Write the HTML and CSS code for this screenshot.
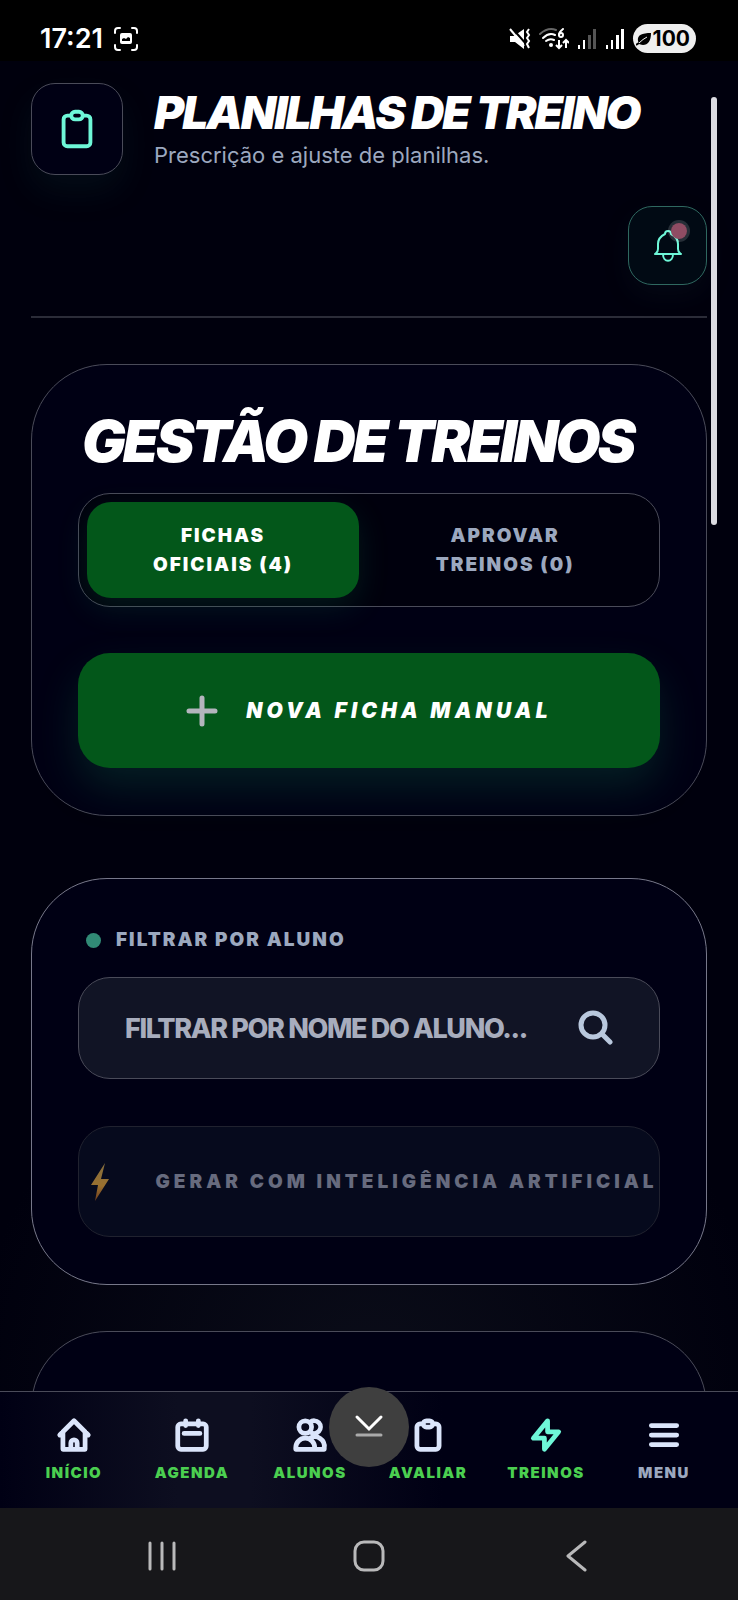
FILE: index.html
```html
<!DOCTYPE html>
<html lang="pt-BR">
<head>
  <meta charset="UTF-8">
  <title>Planilhas de Treino</title>
  <meta name="viewport" content="width=device-width, initial-scale=1.0">
  <link rel="stylesheet" href="styles.css">
</head>
<body>
  <div class="status-bar">
    <div class="status-left">
      <span class="clock">17:21</span>
      <svg width="24" height="24" viewBox="0 0 24 24" fill="none" stroke="#fff" stroke-width="2" stroke-linecap="round">
        <path d="M1 6V4a3 3 0 0 1 3-3h2M18 1h2a3 3 0 0 1 3 3v2M23 18v2a3 3 0 0 1-3 3h-2M6 23H4a3 3 0 0 1-3-3v-2"/>
        <path d="M8 6h8a2 2 0 0 1 2 2v7a2 2 0 0 1-2 2H8a2 2 0 0 1-2-2V8a2 2 0 0 1 2-2z" fill="#fff" stroke="none"/>
        <path d="M8 14v-2l2-1 2 1 2-2 2 1v3z" fill="#000" stroke="none"/>
      </svg>
    </div>
    <div class="status-right">
      <svg width="22" height="22" viewBox="0 0 22 22" fill="#fff">
        <path d="M1 8h4l10-7v20L6 14H1z"/>
        <path d="M3 0l15 17" stroke="#000" stroke-width="2"/>
        <path d="M1 1l14 17" stroke="#fff" stroke-width="2"/>
        <path d="M20 1l-2 3 2 3-2 3 2 3-2 3 2 4" fill="none" stroke="#fff" stroke-width="2"/>
      </svg>
      <svg width="30" height="22" viewBox="0 0 30 22" fill="none" stroke="#fff" stroke-width="2" stroke-linecap="round">
        <path d="M1 6Q9-1 17 2" stroke="#666"/>
        <path d="M4 10Q10 4 16 7M7 13q4-3 8-1"/>
        <circle cx="12" cy="17" r="2" fill="#fff" stroke="none"/>
        <path d="M24 1q-4 3-4 6"/>
        <circle cx="22" cy="7" r="2"/>
        <path d="M20 12v8M17 17l3 3 3-3M27 20v-7M24 15l3-3 3 3" stroke-linecap="butt"/>
      </svg>
      <svg width="20" height="20" viewBox="0 0 20 20" fill="#fff">
        <rect x="1" y="16" width="2" height="4"/>
        <rect x="6" y="11" width="2" height="9"/>
        <rect x="11" y="6" width="3" height="14" fill="#555"/>
        <rect x="16" y="0" width="3" height="20" fill="#555"/>
      </svg>
      <svg width="20" height="20" viewBox="0 0 20 20" fill="#fff">
        <rect x="1" y="16" width="2" height="4"/>
        <rect x="6" y="11" width="2" height="9"/>
        <rect x="11" y="6" width="3" height="14"/>
        <rect x="16" y="0" width="3" height="20"/>
      </svg>
      <div class="battery">
        <svg width="16" height="16" viewBox="0 0 16 16">
          <path d="M2 10C1 4 6 2 15 2c0 8-3 12-8 12-2 0-3-1-4-1z" fill="#000"/>
          <path d="M3 12q4-4 8-6" fill="none" stroke="#efefef" stroke-width="1"/>
          <path d="M0 14l3-2" stroke="#000" stroke-width="2"/>
        </svg>
        <span>100</span>
      </div>
    </div>
  </div>

  <main class="content">
    <header class="page-header">
      <div class="header-top">
        <div class="header-icon">
          <svg width="46" height="46" viewBox="0 0 24 24" fill="none" stroke="currentColor" stroke-width="2" stroke-linecap="round" stroke-linejoin="round">
            <path d="M9 5H7a2 2 0 0 0-2 2v12a2 2 0 0 0 2 2h10a2 2 0 0 0 2-2V7a2 2 0 0 0-2-2h-2M9 5a2 2 0 0 0 2 2h2a2 2 0 0 0 2-2M9 5a2 2 0 0 1 2-2h2a2 2 0 0 1 2 2"/>
          </svg>
        </div>
        <div class="header-text">
          <h1>Planilhas de Treino</h1>
          <p>Prescrição e ajuste de planilhas.</p>
        </div>
      </div>
      <div class="header-actions">
        <button class="bell-button" type="button" aria-label="Notificações">
          <svg width="32" height="36" viewBox="0 0 32 36" fill="none" stroke="currentColor" stroke-width="2" stroke-linecap="round" stroke-linejoin="round">
            <path d="M16 3c-2 0-3 1-3 3-4 2-7 5-7 10v5c0 3-1 3-3 5h26c-2-2-3-2-3-5v-5c0-5-3-8-7-10 0-2-1-3-3-3z"/>
            <path d="M11 26c0 9 10 9 10 0"/>
          </svg>
          <span class="bell-dot"></span>
        </button>
      </div>
    </header>

    <section class="card">
      <h2>Gestão de Treinos</h2>
      <div class="tabs">
        <button class="tab active" type="button">Fichas<br>Oficiais (4)</button>
        <button class="tab" type="button">Aprovar<br>Treinos (0)</button>
      </div>
      <button class="new-button" type="button">
        <svg width="32" height="32" viewBox="0 0 32 32" fill="none" stroke="#b4b5bd" stroke-width="5" stroke-linecap="round">
          <path d="M16 3v26M3 16h26"/>
        </svg>
        <span>Nova Ficha Manual</span>
      </button>
    </section>

    <section class="card filter-card">
      <label class="filter-label" for="filtro"><span class="dot"></span>Filtrar por Aluno</label>
      <div class="search-box">
        <input type="text" id="filtro" placeholder="FILTRAR POR NOME DO ALUNO...">
        <svg width="36" height="36" viewBox="0 0 36 36" fill="none" stroke="#b9c8dd" stroke-width="5" stroke-linecap="round">
          <circle cx="16" cy="15" r="12"/>
          <path d="M25 24l8 8"/>
        </svg>
      </div>
      <button class="ai-button" type="button" disabled>
        <svg width="20" height="40" viewBox="0 0 20 40">
          <defs>
            <linearGradient id="raio" x1="0" y1="0" x2="0" y2="1">
              <stop offset="0" stop-color="#87703f"/>
              <stop offset="0.6" stop-color="#99702f"/>
              <stop offset="1" stop-color="#703c1c"/>
            </linearGradient>
          </defs>
          <path d="M15 1L1 23h7L5 39 19 17h-8z" fill="url(#raio)"/>
        </svg>
        <span>Gerar com Inteligência Artificial</span>
      </button>
    </section>

    <section class="card list-card"></section>
    <div class="scroll-thumb"></div>
  </main>

  <nav class="bottom-nav">
    <a href="#">
      <svg width="38" height="38" viewBox="0 0 24 24" fill="none" stroke="currentColor" stroke-width="3" stroke-linecap="round" stroke-linejoin="round">
        <path d="M3 12l9-9 9 9M5 10v11h14V10M10 21v-4a2 2 0 0 1 4 0v4"/>
      </svg>
      <span>Início</span>
    </a>
    <a href="#">
      <svg width="38" height="38" viewBox="0 0 24 24" fill="none" stroke="currentColor" stroke-width="3" stroke-linecap="round" stroke-linejoin="round">
        <path d="M8 3v3M16 3v3M7 11h10M5 5h14a2 2 0 0 1 2 2v12a2 2 0 0 1-2 2H5a2 2 0 0 1-2-2V7a2 2 0 0 1 2-2z"/>
      </svg>
      <span>Agenda</span>
    </a>
    <a href="#">
      <svg width="38" height="38" viewBox="0 0 24 24" fill="none" stroke="currentColor" stroke-width="3" stroke-linecap="round" stroke-linejoin="round">
        <circle cx="9" cy="7" r="4"/>
        <path d="M12 4a4 4 0 1 1 0 6M3 21v-1a6 6 0 0 1 12 0v1zM12 14a6 6 0 0 1 9 6v1h-6"/>
      </svg>
      <span>Alunos</span>
    </a>
    <a href="#">
      <svg width="38" height="38" viewBox="0 0 24 24" fill="none" stroke="currentColor" stroke-width="3" stroke-linecap="round" stroke-linejoin="round">
        <path d="M9 5H7a2 2 0 0 0-2 2v12a2 2 0 0 0 2 2h10a2 2 0 0 0 2-2V7a2 2 0 0 0-2-2h-2M9 5a2 2 0 0 0 2 2h2a2 2 0 0 0 2-2M9 5a2 2 0 0 1 2-2h2a2 2 0 0 1 2 2"/>
      </svg>
      <span>Avaliar</span>
    </a>
    <a href="#" class="current">
      <svg width="38" height="38" viewBox="0 0 24 24" fill="none" stroke="currentColor" stroke-width="3" stroke-linecap="round" stroke-linejoin="round">
        <path d="M13 10V3L4 14h7v7l9-11h-7z"/>
      </svg>
      <span>Treinos</span>
    </a>
    <a href="#" class="menu">
      <svg width="38" height="38" viewBox="0 0 24 24" fill="none" stroke="currentColor" stroke-width="3" stroke-linecap="round">
        <path d="M4 6h16M4 12h16M4 18h16"/>
      </svg>
      <span>Menu</span>
    </a>
    <button class="scroll-down" type="button" aria-label="Rolar até o fim">
      <svg width="32" height="28" viewBox="0 0 32 28" fill="none" stroke-width="3" stroke-linecap="round">
        <path d="M4 4l12 12L28 4" stroke="#fff"/>
        <path d="M4 22h24" stroke="#aaa"/>
      </svg>
    </button>
  </nav>

  <div class="system-nav">
    <button type="button" aria-label="Recentes">
      <svg width="32" height="32" viewBox="0 0 32 32" stroke="#b9b9ba" stroke-width="3" stroke-linecap="round">
        <path d="M4 3v26M16 3v26M28 3v26"/>
      </svg>
    </button>
    <button type="button" aria-label="Tela inicial">
      <svg width="32" height="32" viewBox="0 0 32 32" fill="none" stroke="#b9b9ba" stroke-width="3">
        <rect x="2" y="2" width="28" height="28" rx="9"/>
      </svg>
    </button>
    <button type="button" aria-label="Voltar">
      <svg width="32" height="32" viewBox="0 0 32 32" fill="none" stroke="#b9b9ba" stroke-width="3" stroke-linecap="round" stroke-linejoin="round">
        <path d="M25 2L8 16l17 14"/>
      </svg>
    </button>
  </div>
</body>
</html>
```
FILE: styles.css
```css
* {
  box-sizing: border-box;
}

body {
  margin: 0;
  height: 100vh;
  display: flex;
  flex-direction: column;
  overflow: hidden;
  font-family: Inter, 'Liberation Sans', sans-serif;
  background: #00000d;
  color: white;
}

button {
  font-family: inherit;
  color: inherit;
  border: none;
  padding: 0;
  background: none;
  cursor: pointer;
}

svg {
  display: block;
  flex-shrink: 0;
}

h1, h2, p {
  margin: 0;
}

/* Barra de status */
.status-bar {
  background: #000;
  height: 61px;
  padding: 16px 42px 0 40px;
  display: flex;
  justify-content: space-between;
  align-items: center;
  flex-shrink: 0;
}

.status-left {
  display: flex;
  align-items: center;
  gap: 11px;
}

.clock {
  font-size: 27px;
  font-weight: 600;
}

.status-right {
  display: flex;
  align-items: center;
  gap: 8px;
}

.battery {
  display: flex;
  align-items: center;
  gap: 1px;
  height: 29px;
  padding: 0 6px 0 3px;
  border-radius: 15px;
  background: #efefef;
  color: #000;
  font-size: 21px;
  font-weight: 700;
}

/* Conteudo */
.content {
  position: relative;
  flex: 1;
  min-height: 0;
  overflow: hidden;
  padding: 22px 31px 0;
  background:
    radial-gradient(circle at 50% 100%, #0b0d19 0, transparent 400px),
    #00000d;
}

.page-header {
  border-bottom: 2px solid #2b2c38;
  padding-bottom: 31px;
  margin-bottom: 46px;
}

.header-top {
  display: flex;
  gap: 31px;
}

.header-icon {
  width: 92px;
  height: 92px;
  display: flex;
  align-items: center;
  justify-content: center;
  border: 1px solid #4a4b59;
  border-radius: 24px;
  background: #000014;
  color: #6ef7d8;
  box-shadow: 0 16px 32px rgba(16, 60, 60, 0.2);
}

.header-text {
  padding-top: 5px;
}

h1 {
  font-size: 46px;
  line-height: 48px;
  font-weight: 900;
  font-style: italic;
  letter-spacing: -2px;
  text-transform: uppercase;
}

.header-text p {
  font-size: 22px;
  line-height: 39px;
  color: #9ca8bf;
}

.header-actions {
  display: flex;
  justify-content: flex-end;
  margin-top: 31px;
}

.bell-button {
  position: relative;
  width: 79px;
  height: 79px;
  display: flex;
  align-items: center;
  justify-content: center;
  border: 1px solid #2f6860;
  border-radius: 24px;
  background: #010a14;
  color: #6ef7d8;
  box-shadow: 0 10px 24px rgba(20, 40, 50, 0.2);
}

.bell-dot {
  position: absolute;
  top: 13px;
  right: 16px;
  width: 22px;
  height: 22px;
  border: 3px solid rgba(255, 255, 255, 0.15);
  border-radius: 50%;
  background: #8f4c63;
  background-clip: padding-box;
}

.card {
  border: 1px solid #4a4b59;
  border-radius: 76px;
  padding: 46px 46px 47px;
  margin-bottom: 62px;
  background: #000014;
}

h2 {
  padding: 0 4px;
  font-size: 58px;
  line-height: 60px;
  font-weight: 900;
  font-style: italic;
  letter-spacing: -3px;
  text-transform: uppercase;
  white-space: nowrap;
}

.tabs {
  display: grid;
  grid-template-columns: 14fr 15fr;
  margin-top: 22px;
  padding: 8px;
  border: 1px solid #4a4b59;
  border-radius: 32px;
  background: #00000d;
}

.tab {
  height: 96px;
  border-radius: 24px;
  font-size: 19px;
  line-height: 29px;
  font-weight: 900;
  letter-spacing: 2px;
  text-transform: uppercase;
  color: #9ca8bf;
}

.tab.active {
  background: #03571a;
  color: white;
  box-shadow: 0 10px 30px rgba(16, 120, 80, 0.2);
}

.new-button {
  display: flex;
  align-items: center;
  justify-content: center;
  gap: 28px;
  width: 100%;
  height: 115px;
  margin-top: 46px;
  border-radius: 32px;
  background: #03571a;
  font-size: 21px;
  font-weight: 900;
  font-style: italic;
  letter-spacing: 0.2em;
  text-transform: uppercase;
  box-shadow: 0 20px 40px rgba(16, 120, 80, 0.25);
}

.filter-card {
  border-color: #77788a;
  margin-bottom: 46px;
}

.filter-label {
  display: flex;
  align-items: center;
  gap: 15px;
  padding: 0 8px;
  font-size: 19px;
  line-height: 30px;
  font-weight: 900;
  letter-spacing: 2px;
  text-transform: uppercase;
  color: #9ca8bf;
}

.dot {
  width: 15px;
  height: 15px;
  border-radius: 50%;
  background: #318a76;
}

.search-box {
  display: flex;
  align-items: center;
  height: 102px;
  margin-top: 22px;
  padding: 0 46px;
  border: 1px solid #4a4b59;
  border-radius: 32px;
  background: #111425;
}

.search-box input {
  flex: 1;
  min-width: 0;
  padding: 0;
  border: none;
  outline: none;
  background: none;
  font-family: inherit;
  font-size: 27px;
  font-weight: 800;
  letter-spacing: -0.05em;
  color: white;
}

.search-box input::placeholder {
  color: #a8adbd;
  opacity: 1;
}

.ai-button {
  display: flex;
  align-items: center;
  justify-content: center;
  gap: 45px;
  width: 100%;
  height: 111px;
  margin-top: 47px;
  padding-left: 10px;
  border: 1px solid #20222f;
  border-radius: 32px;
  background: #060a1d;
  font-size: 19px;
  font-weight: 900;
  letter-spacing: 4px;
  text-transform: uppercase;
  white-space: nowrap;
  color: #676b7e;
}

.list-card {
  height: 400px;
}

.scroll-thumb {
  position: absolute;
  top: 36px;
  right: 21px;
  width: 6px;
  height: 428px;
  border-radius: 3px;
  background: #dcdce2;
}

/* Navegacao */
.bottom-nav {
  position: relative;
  display: grid;
  grid-template-columns: repeat(6, 1fr);
  height: 117px;
  padding: 24px 15px 0;
  border-top: 1px solid #4a4b59;
  background: linear-gradient(90deg, #000014, #0d0e20 24%, #0d0e20 34%, #000014 60%);
  flex-shrink: 0;
}

.bottom-nav a {
  display: flex;
  flex-direction: column;
  align-items: center;
  gap: 7px;
  color: #dbe5fb;
  text-decoration: none;
}

.bottom-nav span {
  font-size: 15px;
  line-height: 24px;
  font-weight: 900;
  letter-spacing: 0.1em;
  text-transform: uppercase;
  color: #4bcf50;
}

.bottom-nav .current {
  color: #6ef7d8;
}

.bottom-nav .menu span {
  color: #9ca8bf;
}

.scroll-down {
  position: absolute;
  top: -5px;
  left: 50%;
  width: 80px;
  height: 80px;
  margin-left: -40px;
  display: flex;
  align-items: center;
  justify-content: center;
  border-radius: 50%;
  background: #3f3f3f;
}

.system-nav {
  display: grid;
  grid-template-columns: repeat(3, 1fr);
  height: 92px;
  padding: 4px 58px 0;
  background: #17171a;
  flex-shrink: 0;
}

.system-nav button {
  display: flex;
  align-items: center;
  justify-content: center;
}
```
